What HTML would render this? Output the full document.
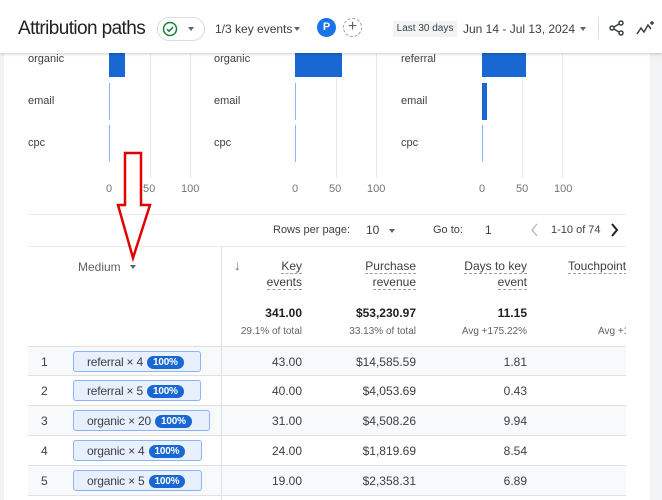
<!DOCTYPE html>
<html><head><style>
*{margin:0;padding:0;box-sizing:border-box}
body{width:662px;height:500px;overflow:hidden;background:#f1f3f4;font-family:"Liberation Sans",sans-serif;position:relative;color:#3c4043}
.abs{position:absolute}
.card{position:absolute;left:4px;top:0;width:646px;height:500px;background:#fff}
.hdr{position:absolute;left:0;top:0;width:662px;height:53px;background:#fff;box-shadow:0 1px 3px rgba(0,0,0,.2);z-index:5}
.lbl{font-size:11px;color:#3c4043}
.ax{font-size:11px;color:#70757a}
.grid{position:absolute;width:1px;background:#e8eaed;top:53px;height:125px}
.bar{position:absolute;background:#1967d2}
.row{position:absolute;left:28px;width:598px;height:30px;border-bottom:1px solid #e0e0e0;font-size:12px;color:#3c4043}
.row.g{background:#f8f9fa}
.row span{position:absolute;top:8px}
.chip{position:absolute;top:4px;left:45px;height:21px;border:1px solid #8ab4f8;background:#e8f0fe;border-radius:3px;font-size:12px;padding:3px 0 0 13px;color:#3c4043;letter-spacing:-0.2px}
.chip b{display:inline-block;background:#1967d2;color:#fff;font-size:10px;border-radius:9px;padding:1px 6px;margin-left:4px;vertical-align:1px}
.num{text-align:right}
.dash{border-bottom:1px dashed #9aa0a6}
</style></head><body>
<div class="card"></div>
<div class="hdr">
 <div class="abs" style="left:18px;top:18px;font-size:19px;letter-spacing:-0.6px;color:#202124">Attribution paths</div>
 <div class="abs" style="left:157px;top:17px;width:48px;height:24px;border:1px solid #dadce0;border-radius:12px"></div>
 <svg class="abs" style="left:162px;top:21px" width="16" height="16" viewBox="0 0 16 16"><circle cx="8" cy="8" r="6.5" fill="none" stroke="#188038" stroke-width="1.5"/><path d="M5 8.2l2 2 4-4" fill="none" stroke="#188038" stroke-width="1.5"/></svg>
 <div class="abs" style="left:188px;top:27px;border:3.5px solid transparent;border-top:4px solid #5f6368"></div>
 <div class="abs" style="left:215px;top:22px;font-size:12px;color:#3c4043">1/3 key events</div>
 <div class="abs" style="left:294px;top:27px;border:3.5px solid transparent;border-top:4px solid #5f6368"></div>
 <div class="abs" style="left:317px;top:18px;width:19px;height:19px;border-radius:50%;background:#1a73e8;color:#fff;font-size:11px;font-weight:bold;text-align:center;line-height:19px">P</div>
 <div class="abs" style="left:343px;top:18px;width:19px;height:19px;border-radius:50%;border:1px dashed #9aa0a6;color:#5f6368;font-size:16px;text-align:center;line-height:16px">+</div>
 <div class="abs" style="left:393px;top:27px;margin-top:-6px;width:64px;height:16px;background:#f1f3f4;font-size:10px;color:#3c4043;text-align:center;line-height:16px">Last 30 days</div>
 <div class="abs" style="left:463px;top:22px;font-size:12px;color:#3c4043">Jun 14 - Jul 13, 2024</div>
 <div class="abs" style="left:580px;top:27px;border:3.5px solid transparent;border-top:4px solid #5f6368"></div>
 <div class="abs" style="left:598px;top:17px;width:1px;height:22px;background:#dadce0"></div>
 <svg class="abs" style="left:608px;top:19px" width="18" height="18" viewBox="0 0 18 18" fill="none" stroke="#3c4043" stroke-width="1.5"><circle cx="13" cy="4" r="2"/><circle cx="4" cy="9" r="2"/><circle cx="13" cy="14" r="2"/><path d="M6 8l5-3M6 10l5 3"/></svg>
 <svg class="abs" style="left:636px;top:19px" width="20" height="18" viewBox="0 0 20 18" fill="none" stroke="#3c4043" stroke-width="1.5"><path d="M1 15l4-6 3 4 4-7 3 4"/><path d="M16 2v4M14 4h4"/></svg>
</div>

<div class="grid" style="left:150px"></div><div class="grid" style="left:190px"></div>
<div class="grid" style="left:336px"></div><div class="grid" style="left:376px"></div>
<div class="grid" style="left:522px"></div><div class="grid" style="left:562px"></div>
<div class="lbl abs" style="left:28px;top:53px">organic</div>
<div class="lbl abs" style="left:28px;top:95px">email</div>
<div class="lbl abs" style="left:28px;top:137px">cpc</div>
<div class="lbl abs" style="left:214px;top:53px">organic</div>
<div class="lbl abs" style="left:214px;top:95px">email</div>
<div class="lbl abs" style="left:214px;top:137px">cpc</div>
<div class="lbl abs" style="left:401px;top:53px">referral</div>
<div class="lbl abs" style="left:401px;top:95px">email</div>
<div class="lbl abs" style="left:401px;top:137px">cpc</div>
<div class="bar" style="left:109px;top:53px;width:16px;height:24px"></div>
<div class="bar" style="left:109px;top:83px;width:1px;height:37px;background:#8ab4f8"></div>
<div class="bar" style="left:109px;top:125px;width:1px;height:37px;background:#8ab4f8"></div>
<div class="bar" style="left:295px;top:53px;width:47px;height:24px"></div>
<div class="bar" style="left:295px;top:83px;width:1px;height:37px;background:#8ab4f8"></div>
<div class="bar" style="left:295px;top:125px;width:1px;height:37px;background:#8ab4f8"></div>
<div class="bar" style="left:482px;top:53px;width:44px;height:24px"></div>
<div class="bar" style="left:482px;top:83px;width:5px;height:37px"></div>
<div class="bar" style="left:482px;top:125px;width:1px;height:37px;background:#8ab4f8"></div>
<div class="ax abs" style="left:106px;top:183px">0</div><div class="ax abs" style="left:143px;top:183px">50</div><div class="ax abs" style="left:181px;top:183px">100</div>
<div class="ax abs" style="left:292px;top:183px">0</div><div class="ax abs" style="left:329px;top:183px">50</div><div class="ax abs" style="left:367px;top:183px">100</div>
<div class="ax abs" style="left:479px;top:183px">0</div><div class="ax abs" style="left:516px;top:183px">50</div><div class="ax abs" style="left:554px;top:183px">100</div>

<div class="abs" style="left:28px;top:214px;width:598px;height:1px;background:#e8eaed"></div>
<div class="abs" style="left:273px;top:224px;font-size:11px;color:#3c4043">Rows per page:</div>
<div class="abs" style="left:366px;top:223px;font-size:12px">10</div>
<div class="abs" style="left:389px;top:229px;border:3.5px solid transparent;border-top:4px solid #5f6368"></div>
<div class="abs" style="left:433px;top:224px;font-size:11px">Go to:</div>
<div class="abs" style="left:485px;top:223px;font-size:12px">1</div>
<svg class="abs" style="left:529px;top:222px" width="10" height="16" viewBox="0 0 10 16"><path d="M8 2L3 8l5 6" fill="none" stroke="#bdc1c6" stroke-width="1.5"/></svg>
<div class="abs" style="left:551px;top:224px;font-size:11px">1-10 of 74</div>
<svg class="abs" style="left:610px;top:222px" width="10" height="16" viewBox="0 0 10 16"><path d="M2 2l5 6-5 6" fill="none" stroke="#202124" stroke-width="2"/></svg>
<div class="abs" style="left:28px;top:246px;width:598px;height:1px;background:#e8eaed"></div>
<div class="abs" style="left:221px;top:247px;width:1px;height:253px;background:#e0e0e0"></div>

<div class="abs" style="left:78px;top:260px;font-size:12px;color:#5f6368">Medium</div>
<div class="abs" style="left:130px;top:265px;border:3px solid transparent;border-top:4px solid #5f6368"></div>
<div class="abs" style="left:234px;top:258px;font-size:13px;color:#5f6368">&#8595;</div>
<div class="abs num" style="left:250px;top:258px;width:52px;font-size:12px;line-height:16px;color:#3c4043"><span class="dash">Key</span><br><span class="dash">events</span></div>
<div class="abs num" style="left:330px;top:258px;width:86px;font-size:12px;line-height:16px"><span class="dash">Purchase</span><br><span class="dash">revenue</span></div>
<div class="abs num" style="left:440px;top:258px;width:87px;font-size:12px;line-height:16px"><span class="dash">Days to key</span><br><span class="dash">event</span></div>
<div class="abs" style="left:568px;top:258px;width:58px;overflow:hidden;white-space:nowrap;font-size:12px;line-height:16px"><span class="dash">Touchpoints</span></div>
<div class="abs num" style="left:240px;top:306px;width:62px;font-size:12px;font-weight:bold;color:#202124">341.00</div>
<div class="abs num" style="left:320px;top:306px;width:96px;font-size:12px;font-weight:bold;color:#202124">$53,230.97</div>
<div class="abs num" style="left:440px;top:306px;width:87px;font-size:12px;font-weight:bold;color:#202124">11.15</div>
<div class="abs num" style="left:220px;top:326px;width:82px;font-size:10px;color:#5f6368">29.1% of total</div>
<div class="abs num" style="left:320px;top:326px;width:96px;font-size:10px;color:#5f6368">33.13% of total</div>
<div class="abs num" style="left:440px;top:326px;width:87px;font-size:10px;color:#5f6368">Avg +175.22%</div>
<div class="abs" style="left:598px;top:326px;width:28px;overflow:hidden;white-space:nowrap;font-size:10px;color:#5f6368">Avg +1</div>

<div class="row g" style="top:346px;border-top:1px solid #e0e0e0"><span style="left:13px">1</span><div class="chip" style="width:128px">referral × 4<b>100%</b></div><span class="num" style="left:220px;width:54px">43.00</span><span class="num" style="left:300px;width:88px">$14,585.59</span><span class="num" style="left:430px;width:69px">1.81</span></div>
<div class="row" style="top:376px"><span style="left:13px">2</span><div class="chip" style="width:128px">referral × 5<b>100%</b></div><span class="num" style="left:220px;width:54px">40.00</span><span class="num" style="left:300px;width:88px">$4,053.69</span><span class="num" style="left:430px;width:69px">0.43</span></div>
<div class="row g" style="top:406px"><span style="left:13px">3</span><div class="chip" style="width:137px">organic × 20<b>100%</b></div><span class="num" style="left:220px;width:54px">31.00</span><span class="num" style="left:300px;width:88px">$4,508.26</span><span class="num" style="left:430px;width:69px">9.94</span></div>
<div class="row" style="top:436px"><span style="left:13px">4</span><div class="chip" style="width:129px">organic × 4<b>100%</b></div><span class="num" style="left:220px;width:54px">24.00</span><span class="num" style="left:300px;width:88px">$1,819.69</span><span class="num" style="left:430px;width:69px">8.54</span></div>
<div class="row g" style="top:466px"><span style="left:13px">5</span><div class="chip" style="width:129px">organic × 5<b>100%</b></div><span class="num" style="left:220px;width:54px">19.00</span><span class="num" style="left:300px;width:88px">$2,358.31</span><span class="num" style="left:430px;width:69px">6.89</span></div>
<div class="abs" style="left:221px;top:346px;width:1px;height:154px;background:#e0e0e0;z-index:2"></div>

<svg class="abs" style="left:110px;top:148px;z-index:6" width="50" height="115" viewBox="0 0 50 115"><path d="M15 5H31V57H40L23 110L8 57H15Z" fill="none" stroke="#e00000" stroke-width="2.5" stroke-linejoin="miter"/></svg>
</body></html>
